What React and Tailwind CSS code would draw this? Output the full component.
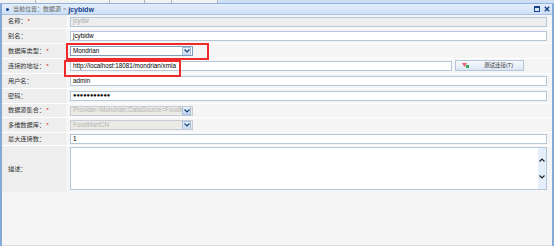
import React from 'react';

const Star = () => <span className="text-[#e02020] ml-[1px]">*</span>;

const Label = ({ text, req, h = 'h-[15px]' }) => (
    <div className={`w-[64px] shrink-0 ${h} bg-[#eeeeee] border-b border-white flex items-center pl-[6px] text-[6.2px] leading-none text-[#333]`}>
        {text}：{req && <Star />}
    </div>
);

const Chevron = () => (
    <div className="w-[9px] h-[9px] shrink-0 mr-[1px] bg-gradient-to-b from-[#e8f1fc] to-[#c6daf3] border border-[#a8c0de] flex items-center justify-center">
        <svg width="6" height="4" viewBox="0 0 6 4"><path d="M0.5 0.5 L3 3 L5.5 0.5" stroke="#1d3f73" strokeWidth="1.2" fill="none" /></svg>
    </div>
);

const Row = ({ label, req, h, children }) => (
    <div className="flex">
        <Label text={label} req={req} h={h} />
        <div className={`flex-1 ${h || 'h-[15px]'} border-b border-white flex items-center pl-[4px] pr-[5px]`}>{children}</div>
    </div>
);

const inputCls = 'h-[10px] w-full bg-white border border-[#b6c7dc] flex items-center px-[2px] text-[6.3px] text-black leading-none';
const selectCls = 'w-[123px] h-[10px] border flex items-center justify-between pl-[2px] text-[6.3px] leading-none whitespace-nowrap overflow-hidden';

export default function App() {
    return (
        <div className="relative w-[554px] h-[246px] bg-[#f5f5f5] overflow-hidden" style={{ fontFamily: '"Liberation Sans", "Noto Sans CJK SC", sans-serif' }}>
            {/* tab strip */}
            <div className="flex h-[4px] border-b border-[#8db2e3]">
                <div className="w-[36px] bg-[#f2f2f2] border-r border-[#b5b5b5]" />
                <div className="w-[74px] bg-[#f2f2f2] border-r border-[#b5b5b5]" />
                <div className="w-[35px] bg-[#f2f2f2] border-r border-[#b5b5b5]" />
                <div className="w-[27px] bg-[#f2f2f2] border-r border-[#b5b5b5]" />
                <div className="w-[46px] bg-[#f2f2f2] border-r border-[#b5b5b5]" />
                <div className="flex-1 bg-[#cfe0f5]" />
            </div>

            <div className="h-[242px] border-l-2 border-r-2 border-[#85a9d6] flex flex-col">
                {/* header */}
                <div className="h-[11px] shrink-0 bg-gradient-to-b from-[#e6eefa] to-[#cddff4] border-b border-[#a9c3e6] flex items-center pl-[4px] pr-[2px] text-[6px] leading-none">
                    <span className="w-[3px] h-[3px] rounded-full bg-[#15428b] mr-[4px]" />
                    <span className="text-[#666]">当前位置：数据源 &gt; </span>
                    <span className="text-[#15428b] font-bold ml-[2px] text-[7px]">jcybidw</span>
                    <div className="ml-auto flex items-center gap-[4px]">
                        <svg width="6" height="6" viewBox="0 0 6 6"><rect x="0.5" y="0.5" width="5" height="5" fill="none" stroke="#15428b" /><rect x="0.5" y="0.5" width="5" height="1.5" fill="#15428b" /></svg>
                        <svg width="6" height="6" viewBox="0 0 6 6"><path d="M0.8 0.8 L5.2 5.2 M5.2 0.8 L0.8 5.2" stroke="#15428b" strokeWidth="1.4" /></svg>
                    </div>
                </div>

                <div>
                    <Row label="名称" req h="h-[14px]">
                        <div className={`${inputCls} !bg-[#ededed] !text-[#aaa]`}>jcydw</div>
                    </Row>
                    <Row label="别名">
                        <div className={inputCls}>jcybidw</div>
                    </Row>
                    <Row label="数据库类型" req>
                        <div className={`${selectCls} bg-white border-[#7f9db9] text-black`}>
                            <span>Mondrian</span><Chevron />
                        </div>
                    </Row>
                    <Row label="连接的地址" req>
                        <div className="flex items-center w-full gap-[3px]">
                            <div className={`${inputCls} !w-[382px]`}>http://localhost:18081/mondrian/xmla</div>
                            <button className="w-[69px] h-[11px] mb-[1px] bg-gradient-to-b from-[#f6f9fd] to-[#dbe6f3] border border-[#b4c6dc] flex items-center pl-[6px] text-[5.5px] leading-none text-[#333]">
                                <svg width="8" height="7" viewBox="0 0 8 7"><path d="M0 1 L5 1 L2.5 5 Z" fill="#e8606e" /><path d="M4 3 L7 3 L7 6 L4 6 Z" fill="#3aa35a" /></svg>
                                <span className="ml-[14px]">测试连接(T)</span>
                            </button>
                        </div>
                    </Row>
                    <Row label="用户名">
                        <div className={inputCls}>admin</div>
                    </Row>
                    <Row label="密码">
                        <div className={`${inputCls} !text-[5.6px]`}>●●●●●●●●●●●</div>
                    </Row>
                    <Row label="数据源集合" req h="h-[14px]">
                        <div className={`${selectCls} bg-[#ecebe6] border-[#c6cdd6] text-[#b4b4b4]`}>
                            <span className="overflow-hidden">Provider=Mondrian;DataSource=FoodMart</span><Chevron />
                        </div>
                    </Row>
                    <Row label="多维数据库" req>
                        <div className={`${selectCls} bg-[#ecebe6] border-[#c6cdd6] text-[#b4b4b4]`}>
                            <span>FoodMartCN</span><Chevron />
                        </div>
                    </Row>
                    <Row label="最大连接数" h="h-[13px]">
                        <div className={inputCls}>1</div>
                    </Row>
                    <div className="flex">
                        <div className="w-[64px] shrink-0 h-[46px] bg-[#eeeeee] flex items-center pl-[6px] text-[6.2px] leading-none text-[#333]">描述：</div>
                        <div className="flex-1 h-[46px] pl-[4px] pr-[5px] pt-[1px]">
                            <div className="h-[43px] bg-white border border-[#b6c7dc] flex justify-end">
                                <div className="w-[8px] h-full bg-[#e3eefa] flex flex-col items-center justify-around py-[4px]">
                                    <svg width="6" height="4" viewBox="0 0 6 4"><path d="M0.5 3.5 L3 1 L5.5 3.5" stroke="#222" strokeWidth="1.2" fill="none" /></svg>
                                    <svg width="6" height="4" viewBox="0 0 6 4"><path d="M0.5 0.5 L3 3 L5.5 0.5" stroke="#222" strokeWidth="1.2" fill="none" /></svg>
                                </div>
                            </div>
                        </div>
                    </div>
                </div>
                <div className="flex-1 border-b border-[#dcdcdc]" />
            </div>

            {/* red annotation boxes */}
            <div className="absolute left-[66px] top-[43px] w-[143px] h-[17px] border-2 border-[#ee2a2a]" />
            <div className="absolute left-[64px] top-[60px] w-[117px] h-[17px] border-2 border-[#ee2a2a]" />
        </div>
    );
}
